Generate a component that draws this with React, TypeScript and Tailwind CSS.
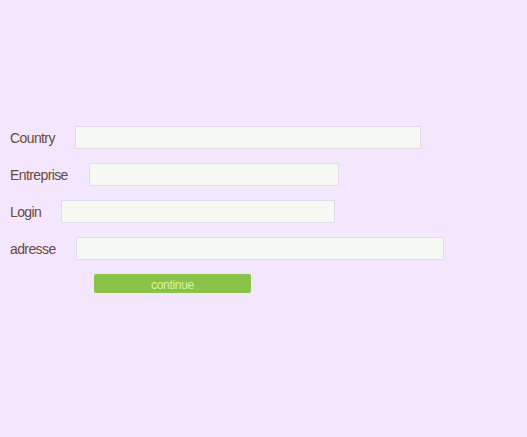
const fields = [
  { label: 'Country', labelW: 'w-[65px]', inputW: 'w-[346px]' },
  { label: 'Entreprise', labelW: 'w-[79px]', inputW: 'w-[250px]' },
  { label: 'Login', labelW: 'w-[51px]', inputW: 'w-[274px]' },
  { label: 'adresse', labelW: 'w-[66px]', inputW: 'w-[368px]' },
];

export default function App() {
  return (
    <div className="min-h-[437px] w-full bg-[#f4e6fd] font-['Liberation_Sans',Arial,sans-serif]">
      <form className="flex flex-col gap-[14px] pl-[10px] pt-[126px]">
        {fields.map((f) => (
          <div key={f.label} className="flex items-center">
            <label className={`${f.labelW} pt-[2px] text-[14px] tracking-[-0.6px] text-[#6a4a3c]`}>{f.label}</label>
            <input
              type="text"
              className={`${f.inputW} h-[23px] border border-[#e2dbe9] bg-[#f6f9f3] outline-none`}
            />
          </div>
        ))}
        <button
          type="button"
          className="ml-[84px] h-[19px] w-[157px] rounded-[2px] bg-[#8bc34a] pt-[3px] text-[12px] leading-[16px] tracking-[-0.3px] text-[#d9f5a6]"
        >
          continue
        </button>
      </form>
    </div>
  );
}
